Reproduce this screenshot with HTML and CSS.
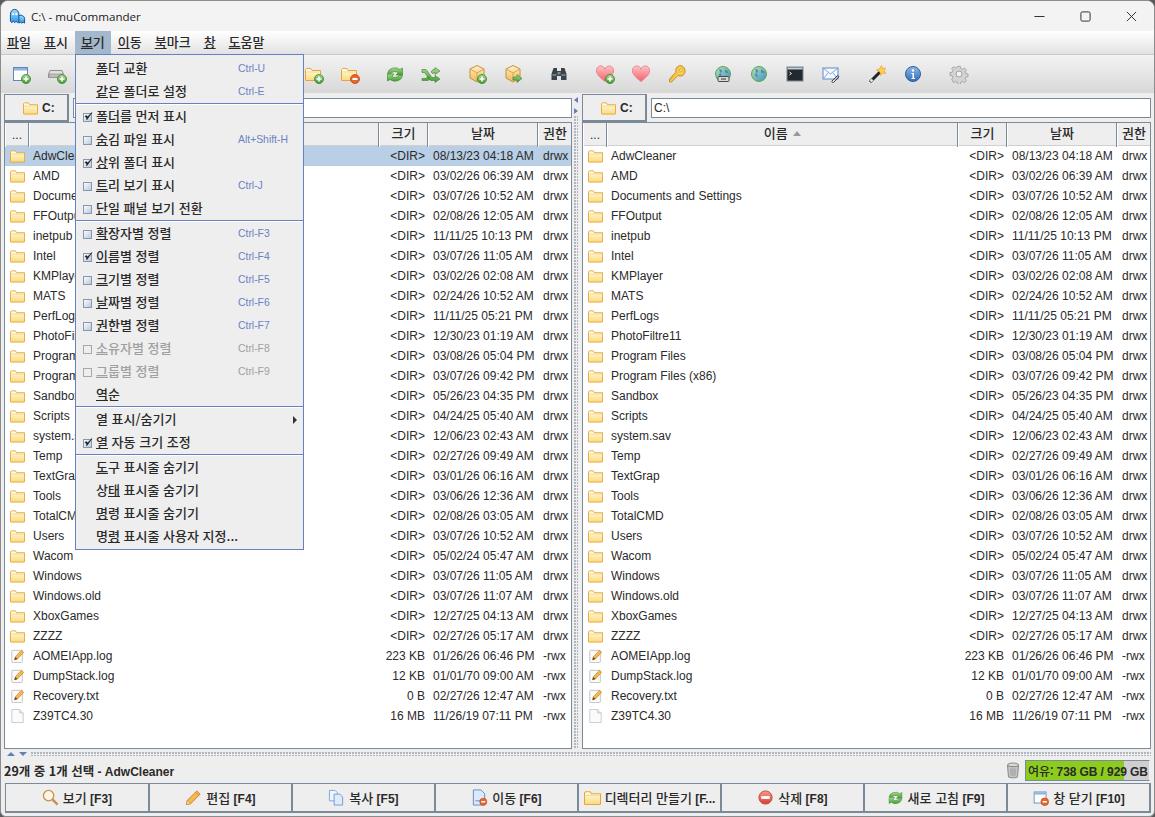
FILE: index.html
```html
<!DOCTYPE html>
<html lang="ko">
<head>
    <meta charset="UTF-8">
    <title>C:\ - muCommander</title>
    <link rel="stylesheet" href="styles.css">
</head>
<body>
    <!-- Icones -->
    <svg class="defs" xmlns="http://www.w3.org/2000/svg">
        <defs>
            <linearGradient id="gFolder" x1="0" y1="0" x2="0" y2="1"><stop offset="0" stop-color="#fffdf0"/><stop offset="1" stop-color="#fadb78"/></linearGradient>
            <linearGradient id="gGreen" x1="0" y1="0" x2="0" y2="1"><stop offset="0" stop-color="#a6dc8c"/><stop offset="1" stop-color="#3f9c34"/></linearGradient>
            <linearGradient id="gRed" x1="0" y1="0" x2="0" y2="1"><stop offset="0" stop-color="#f89a8c"/><stop offset="1" stop-color="#d83c30"/></linearGradient>
            <linearGradient id="gBox" x1="0" y1="0" x2="0" y2="1"><stop offset="0" stop-color="#fff2c8"/><stop offset="1" stop-color="#eeb858"/></linearGradient>
            <linearGradient id="gBlue" x1="0" y1="0" x2="0" y2="1"><stop offset="0" stop-color="#8fb8ea"/><stop offset="1" stop-color="#2f6cb8"/></linearGradient>
            <linearGradient id="gChk" x1="0" y1="0" x2="1" y2="1"><stop offset="0" stop-color="#fff"/><stop offset="1" stop-color="#b4c6de"/></linearGradient>
            <linearGradient id="gGlobe" x1="0" y1="0" x2="1" y2="1"><stop offset="0" stop-color="#bfe3a6"/><stop offset="1" stop-color="#3d8ecb"/></linearGradient>
            <linearGradient id="gHeart" x1="0" y1="0" x2="0" y2="1"><stop offset="0" stop-color="#ffc4c4"/><stop offset="1" stop-color="#f0606c"/></linearGradient>
            <linearGradient id="gGhost" x1="0" y1="0" x2="0" y2="1"><stop offset="0" stop-color="#9fdcff"/><stop offset="1" stop-color="#2f96e6"/></linearGradient>

            <symbol id="folder" viewBox="0 0 16 14"><path d="M.5 2.500V13a.5.5 0 0 0 .5.5h14a.5.5 0 0 0 .5-.5V3.500H7L5.800 1.500H1.500z" fill="url(#gFolder)" stroke="#e5a63e"/><path d="M1.500 5h13" stroke="#f6d98c"/></symbol>
            <symbol id="file" viewBox="0 0 16 16"><path d="M1.500.5h9l4 4v11h-13z" fill="#fbfbfb" stroke="#c4c4c4"/><path d="M10.500.5v4h4" fill="#ececec" stroke="#c4c4c4"/></symbol>
            <symbol id="txt" viewBox="0 0 16 16"><rect x="1.500" y="1.500" width="12" height="14" rx="1" fill="#fbfbfb" stroke="#bdbdbd"/><path d="M4.500 12.500l1-3.500 7-7.500 2.500 2.300-7 7.500z" fill="#f6b94e" stroke="#c9822a" stroke-width=".8"/><path d="M4.500 12.500l1-3.500 2.500 2.300z" fill="#5a4630"/></symbol>

            <symbol id="plus" viewBox="0 0 20 20"><circle cx="15" cy="15" r="4.500" fill="url(#gGreen)" stroke="#3c7c30" stroke-width=".8"/><path d="M15 12.500v5M12.500 15h5" stroke="#fff" stroke-width="1.600"/></symbol>
            <symbol id="minus" viewBox="0 0 20 20"><circle cx="15" cy="15" r="4.500" fill="#e9672a" stroke="#b9481a" stroke-width=".8"/><path d="M12.500 15h5" stroke="#fff" stroke-width="1.800"/></symbol>
            <symbol id="win" viewBox="0 0 20 20"><rect x="2.500" y="3.500" width="14" height="13" fill="#fdfdfd" stroke="#5f86bd"/><rect x="3" y="4" width="13" height="2.500" fill="#8fb1de"/></symbol>
            <symbol id="drive" viewBox="0 0 20 20"><path d="M3 6.500h12l1.500 4v3h-15v-3z" fill="#e0e0e0" stroke="#8c8c8c"/><rect x="2" y="10" width="14" height="3.500" fill="#bdbdbd" stroke="#8c8c8c" stroke-width=".6"/></symbol>
            <symbol id="box" viewBox="0 0 20 20"><path d="M10 1.500l7 3.500v9l-7 4-7-4V5z" fill="url(#gBox)" stroke="#c68f3a"/><path d="M3 5l7 4 7-4M10 9v9" fill="none" stroke="#d9a64e"/></symbol>
            <symbol id="heart" viewBox="0 0 20 20"><path d="M10 17.500C4 13 1.500 10 1.500 7a4.300 4.300 0 0 1 8.500-1.500A4.300 4.300 0 0 1 18.500 7c0 3-2.500 6-8.500 10.500z" fill="url(#gHeart)" stroke="#e88a90"/></symbol>
            <symbol id="globe" viewBox="0 0 20 20"><circle cx="10" cy="10" r="7.500" fill="url(#gGlobe)" stroke="#5aa84c"/><path d="M6 5c2 0 3 1 3 2.500S6 9 6 11s3 1 3.500 3M12 5.500c1.500 1 3 1.500 3.500 3-1.500 1-3 .5-3.500-.5z" fill="#3f7fbe" stroke="none" opacity=".85"/></symbol>
            <symbol id="refresh" viewBox="0 0 20 20"><path d="M2.500 9.500A7.500 6.500 0 0 1 15 5.500l2.500-1.500v7H11l2.200-2.200A4.200 3.500 0 0 0 6.200 9.500z" fill="url(#gGreen)" stroke="#4c8c3c" stroke-width=".7"/><path d="M17.500 11.500A7.500 6.500 0 0 1 5 15.500L2.500 17v-7H9l-2.200 2.200a4.200 3.500 0 0 0 7-.7z" fill="url(#gGreen)" stroke="#4c8c3c" stroke-width=".7"/></symbol>

            <symbol id="cb-on" viewBox="0 0 10 10"><rect x=".5" y="1.500" width="8" height="8" fill="url(#gChk)" stroke="#8a97a8"/><path d="M2 4.500l1.500 1 .3 2.300L9 .5 4.700 4.800 3 3.500z" fill="#1c1c1c" stroke="#1c1c1c" stroke-width=".6"/></symbol>
            <symbol id="cb-off" viewBox="0 0 10 10"><rect x=".5" y="1.500" width="8" height="8" fill="url(#gChk)" stroke="#8a97a8"/></symbol>
            <symbol id="cb-dis" viewBox="0 0 10 10"><rect x=".5" y="1.500" width="8" height="8" fill="none" stroke="#a8a8a8"/></symbol>
        </defs>
    </svg>

    <div class="window">
        <div class="titlebar">
            <svg class="app-icon" viewBox="0 0 18 18"><path d="M9 9c1-2 7-2 7.500 2v5l-1.500-1-1.500 1-1.500-1-1.500 1z" fill="url(#gGhost)" stroke="#0f4f86"/><path d="M1.500 14V7C1.500 3.500 3.500 1.500 6 1.500S10.500 3.500 10.500 7v7l-1.500 1.500L7.500 14 6 15.500 4.500 14 3 15.500z" fill="url(#gGhost)" stroke="#0f4f86"/><circle cx="4.500" cy="6.500" r="1.200" fill="#fff"/><circle cx="7.800" cy="6.500" r="1.200" fill="#fff"/></svg>
            <span class="title">C:\ - muCommander</span>
            <div class="winctl">
                <svg viewBox="0 0 12 12"><path d="M.5 6h11" stroke="#222"/></svg>
                <svg viewBox="0 0 12 12"><rect x="1" y="1" width="10" height="10" rx="1.500" fill="none" stroke="#222"/></svg>
                <svg viewBox="0 0 12 12"><path d="M1 1l10 10M11 1L1 11" stroke="#222"/></svg>
            </div>
        </div>

        <div class="menubar">
            <span class="menu"><u>파</u>일</span>
            <span class="menu"><u>표</u>시</span>
            <span class="menu open"><u>보</u>기</span>
            <span class="menu"><u>이</u>동</span>
            <span class="menu"><u>북</u>마크</span>
            <span class="menu"><u>창</u></span>
            <span class="menu"><u>도</u>움말</span>
        </div>

        <div class="toolbar">
            <span class="tool"><svg><use href="#win"/><use href="#plus"/></svg></span>
            <span class="tool"><svg><use href="#drive"/><use href="#plus"/></svg></span>
            <span class="tool-hidden"></span>
            <span class="tool"><svg><use href="#folder" x="1" y="3" width="16" height="14"/><use href="#plus"/></svg></span>
            <span class="tool"><svg><use href="#folder" x="1" y="3" width="16" height="14"/><use href="#minus"/></svg></span>
            <span class="tool sep9"><svg><use href="#refresh"/></svg></span>
            <span class="tool"><svg viewBox="0 0 20 20"><path d="M1 5.500h4l6 8h3v-2l5 3.500-5 3.500v-2h-4.500l-6-8H1zM1 14.500h4l2-2.500 2 2.300-1.800 2.200H1zM10 8l2-2.500h2v-2l5 3.500-5 3.500v-2h-1l-1 1.300z" fill="url(#gGreen)" stroke="#3f7c34" stroke-width=".6"/></svg></span>
            <span class="tool sep"><svg><use href="#box"/><use href="#plus"/></svg></span>
            <span class="tool"><svg><use href="#box"/><path d="M10 13h4v-2.500l5 4-5 4V16h-4z" fill="url(#gGreen)" stroke="#3f7c34" stroke-width=".6"/></svg></span>
            <span class="tool sep"><svg viewBox="0 0 20 20"><path d="M4.500 4h3.500v3h4V4h3.500l2 6v6h-5.500v-4H8v4H2.500v-6z" fill="#39434c"/><path d="M3.500 11h4M12.500 11h4" stroke="#aab4bd"/><rect x="8.500" y="8" width="3" height="2.500" fill="#7c8892"/></svg></span>
            <span class="tool sep"><svg><use href="#heart"/><use href="#plus"/></svg></span>
            <span class="tool"><svg><use href="#heart"/></svg></span>
            <span class="tool"><svg viewBox="0 0 20 20"><path d="M12.500 1.500a5.500 5.500 0 0 1 2.500 10.400 5.500 5.500 0 0 1-4-.5L4.500 18H2.500v-3l1.500-.2V13l1.500-.2.2-1.500L9 8.500a5.500 5.500 0 0 1 3.500-7z" fill="#f7c84a" stroke="#c98f22"/><circle cx="14" cy="6" r="1.400" fill="#fff3c0" stroke="#c98f22" stroke-width=".6"/></svg></span>
            <span class="tool sep"><svg><use href="#globe"/><rect x="5" y="12.500" width="11" height="5" rx="1" fill="#d8d8d8" stroke="#4a4a4a"/><path d="M8 15h5" stroke="#333"/></svg></span>
            <span class="tool"><svg><use href="#globe"/></svg></span>
            <span class="tool"><svg viewBox="0 0 20 20"><rect x="2" y="3" width="16" height="14" fill="#222a30" stroke="#7c8a96"/><rect x="2.500" y="3.500" width="15" height="2" fill="#c4ccd4"/><path d="M4.500 8l2 1.500-2 1.500" fill="none" stroke="#eee"/></svg></span>
            <span class="tool"><svg viewBox="0 0 20 20"><rect x="2" y="4" width="15" height="11" fill="#f4f8ff" stroke="#5f8ac2"/><path d="M2 4l7.500 6L17 4M2 15l5-6M17 15l-5-6" fill="none" stroke="#7ea6d8"/><path d="M11 17l5-5c1-1 2.500.5 1.500 1.500l-5 5c-1 .5-2-.5-1.500-1.500z" fill="none" stroke="#444"/></svg></span>
            <span class="tool sep"><svg viewBox="0 0 20 20"><path d="M3 18L13 8" stroke="#222" stroke-width="3"/><path d="M3.500 17.500l2-2" stroke="#eee" stroke-width="2.400"/><path d="M14.500 1.500l1 3 3-.5-1.500 3 2 2.500-3.500-.5-2 2.500-.5-3.500L9.500 6l3-1z" fill="#fbd24a" stroke="#e8942a" stroke-width=".6"/></svg></span>
            <span class="tool"><svg viewBox="0 0 20 20"><circle cx="10" cy="10" r="7.500" fill="url(#gBlue)" stroke="#2c5f9e"/><circle cx="10" cy="6.500" r="1.200" fill="#fff"/><path d="M8.500 9H11v5h1v1H8.500v-1h1v-4h-1z" fill="#fff"/></svg></span>
            <span class="tool sep"><svg viewBox="0 0 20 20"><path d="M8.500 1.500h3l.5 2.500 1.800.8 2.200-1.400 2.100 2.100-1.400 2.200.8 1.800 2.500.5v3l-2.500.5-.8 1.800 1.400 2.200-2.100 2.100-2.200-1.400-1.800.8-.5 2.500h-3l-.5-2.500-1.800-.8-2.200 1.400L1.900 16l1.400-2.200-.8-1.800L0 11.500v-3L2.500 8l.8-1.800L1.900 4l2.100-2.100 2.200 1.400L8 2.500z" transform="translate(1 1) scale(.9)" fill="#d4d4d4" stroke="#a0a0a0"/><circle cx="10" cy="10" r="3" fill="#f2f2f2" stroke="#a0a0a0"/></svg></span>
        </div>

        <div class="panes">
            <div class="pane">
                <div class="locbar">
                    <div class="drive"><svg class="ic"><use href="#folder"/></svg>C:</div>
                    <div class="path"></div>
                </div>
                <div class="filetable">
                    <div class="row head">
                        <span class="up">...</span><span class="hname"></span><span class="ko">크기</span><span class="ko">날짜</span><span class="ko">권한</span>
                    </div>
                    <div class="row sel"><svg class="ic"><use href="#folder"/></svg><span class="nm">AdwCleaner</span><span class="sz">&lt;DIR&gt;</span><span class="dt">08/13/23 04:18 AM</span><span class="pm">drwx</span></div>
                    <div class="row"><svg class="ic"><use href="#folder"/></svg><span class="nm">AMD</span><span class="sz">&lt;DIR&gt;</span><span class="dt">03/02/26 06:39 AM</span><span class="pm">drwx</span></div>
                    <div class="row"><svg class="ic"><use href="#folder"/></svg><span class="nm">Documents and Settings</span><span class="sz">&lt;DIR&gt;</span><span class="dt">03/07/26 10:52 AM</span><span class="pm">drwx</span></div>
                    <div class="row"><svg class="ic"><use href="#folder"/></svg><span class="nm">FFOutput</span><span class="sz">&lt;DIR&gt;</span><span class="dt">02/08/26 12:05 AM</span><span class="pm">drwx</span></div>
                    <div class="row"><svg class="ic"><use href="#folder"/></svg><span class="nm">inetpub</span><span class="sz">&lt;DIR&gt;</span><span class="dt">11/11/25 10:13 PM</span><span class="pm">drwx</span></div>
                    <div class="row"><svg class="ic"><use href="#folder"/></svg><span class="nm">Intel</span><span class="sz">&lt;DIR&gt;</span><span class="dt">03/07/26 11:05 AM</span><span class="pm">drwx</span></div>
                    <div class="row"><svg class="ic"><use href="#folder"/></svg><span class="nm">KMPlayer</span><span class="sz">&lt;DIR&gt;</span><span class="dt">03/02/26 02:08 AM</span><span class="pm">drwx</span></div>
                    <div class="row"><svg class="ic"><use href="#folder"/></svg><span class="nm">MATS</span><span class="sz">&lt;DIR&gt;</span><span class="dt">02/24/26 10:52 AM</span><span class="pm">drwx</span></div>
                    <div class="row"><svg class="ic"><use href="#folder"/></svg><span class="nm">PerfLogs</span><span class="sz">&lt;DIR&gt;</span><span class="dt">11/11/25 05:21 PM</span><span class="pm">drwx</span></div>
                    <div class="row"><svg class="ic"><use href="#folder"/></svg><span class="nm">PhotoFiltre11</span><span class="sz">&lt;DIR&gt;</span><span class="dt">12/30/23 01:19 AM</span><span class="pm">drwx</span></div>
                    <div class="row"><svg class="ic"><use href="#folder"/></svg><span class="nm">Program Files</span><span class="sz">&lt;DIR&gt;</span><span class="dt">03/08/26 05:04 PM</span><span class="pm">drwx</span></div>
                    <div class="row"><svg class="ic"><use href="#folder"/></svg><span class="nm">Program Files (x86)</span><span class="sz">&lt;DIR&gt;</span><span class="dt">03/07/26 09:42 PM</span><span class="pm">drwx</span></div>
                    <div class="row"><svg class="ic"><use href="#folder"/></svg><span class="nm">Sandbox</span><span class="sz">&lt;DIR&gt;</span><span class="dt">05/26/23 04:35 PM</span><span class="pm">drwx</span></div>
                    <div class="row"><svg class="ic"><use href="#folder"/></svg><span class="nm">Scripts</span><span class="sz">&lt;DIR&gt;</span><span class="dt">04/24/25 05:40 AM</span><span class="pm">drwx</span></div>
                    <div class="row"><svg class="ic"><use href="#folder"/></svg><span class="nm">system.sav</span><span class="sz">&lt;DIR&gt;</span><span class="dt">12/06/23 02:43 AM</span><span class="pm">drwx</span></div>
                    <div class="row"><svg class="ic"><use href="#folder"/></svg><span class="nm">Temp</span><span class="sz">&lt;DIR&gt;</span><span class="dt">02/27/26 09:49 AM</span><span class="pm">drwx</span></div>
                    <div class="row"><svg class="ic"><use href="#folder"/></svg><span class="nm">TextGrap</span><span class="sz">&lt;DIR&gt;</span><span class="dt">03/01/26 06:16 AM</span><span class="pm">drwx</span></div>
                    <div class="row"><svg class="ic"><use href="#folder"/></svg><span class="nm">Tools</span><span class="sz">&lt;DIR&gt;</span><span class="dt">03/06/26 12:36 AM</span><span class="pm">drwx</span></div>
                    <div class="row"><svg class="ic"><use href="#folder"/></svg><span class="nm">TotalCMD</span><span class="sz">&lt;DIR&gt;</span><span class="dt">02/08/26 03:05 AM</span><span class="pm">drwx</span></div>
                    <div class="row"><svg class="ic"><use href="#folder"/></svg><span class="nm">Users</span><span class="sz">&lt;DIR&gt;</span><span class="dt">03/07/26 10:52 AM</span><span class="pm">drwx</span></div>
                    <div class="row"><svg class="ic"><use href="#folder"/></svg><span class="nm">Wacom</span><span class="sz">&lt;DIR&gt;</span><span class="dt">05/02/24 05:47 AM</span><span class="pm">drwx</span></div>
                    <div class="row"><svg class="ic"><use href="#folder"/></svg><span class="nm">Windows</span><span class="sz">&lt;DIR&gt;</span><span class="dt">03/07/26 11:05 AM</span><span class="pm">drwx</span></div>
                    <div class="row"><svg class="ic"><use href="#folder"/></svg><span class="nm">Windows.old</span><span class="sz">&lt;DIR&gt;</span><span class="dt">03/07/26 11:07 AM</span><span class="pm">drwx</span></div>
                    <div class="row"><svg class="ic"><use href="#folder"/></svg><span class="nm">XboxGames</span><span class="sz">&lt;DIR&gt;</span><span class="dt">12/27/25 04:13 AM</span><span class="pm">drwx</span></div>
                    <div class="row"><svg class="ic"><use href="#folder"/></svg><span class="nm">ZZZZ</span><span class="sz">&lt;DIR&gt;</span><span class="dt">02/27/26 05:17 AM</span><span class="pm">drwx</span></div>
                    <div class="row"><svg class="ic"><use href="#txt"/></svg><span class="nm">AOMEIApp.log</span><span class="sz">223 KB</span><span class="dt">01/26/26 06:46 PM</span><span class="pm">-rwx</span></div>
                    <div class="row"><svg class="ic"><use href="#txt"/></svg><span class="nm">DumpStack.log</span><span class="sz">12 KB</span><span class="dt">01/01/70 09:00 AM</span><span class="pm">-rwx</span></div>
                    <div class="row"><svg class="ic"><use href="#txt"/></svg><span class="nm">Recovery.txt</span><span class="sz">0 B</span><span class="dt">02/27/26 12:47 AM</span><span class="pm">-rwx</span></div>
                    <div class="row"><svg class="ic"><use href="#file"/></svg><span class="nm">Z39TC4.30</span><span class="sz">16 MB</span><span class="dt">11/26/19 07:11 PM</span><span class="pm">-rwx</span></div>
                </div>
            </div>

            <div class="vsplit"><i class="arr-l"></i><i class="arr-r"></i><div class="dots"></div></div>

            <div class="pane right">
                <div class="locbar">
                    <div class="drive"><svg class="ic"><use href="#folder"/></svg>C:</div>
                    <div class="path">C:\</div>
                </div>
                <div class="filetable">
                    <div class="row head">
                        <span class="up">...</span><span class="hname ko">이름 <i class="sort"></i></span><span class="ko">크기</span><span class="ko">날짜</span><span class="ko">권한</span>
                    </div>
                    <div class="row"><svg class="ic"><use href="#folder"/></svg><span class="nm">AdwCleaner</span><span class="sz">&lt;DIR&gt;</span><span class="dt">08/13/23 04:18 AM</span><span class="pm">drwx</span></div>
                    <div class="row"><svg class="ic"><use href="#folder"/></svg><span class="nm">AMD</span><span class="sz">&lt;DIR&gt;</span><span class="dt">03/02/26 06:39 AM</span><span class="pm">drwx</span></div>
                    <div class="row"><svg class="ic"><use href="#folder"/></svg><span class="nm">Documents and Settings</span><span class="sz">&lt;DIR&gt;</span><span class="dt">03/07/26 10:52 AM</span><span class="pm">drwx</span></div>
                    <div class="row"><svg class="ic"><use href="#folder"/></svg><span class="nm">FFOutput</span><span class="sz">&lt;DIR&gt;</span><span class="dt">02/08/26 12:05 AM</span><span class="pm">drwx</span></div>
                    <div class="row"><svg class="ic"><use href="#folder"/></svg><span class="nm">inetpub</span><span class="sz">&lt;DIR&gt;</span><span class="dt">11/11/25 10:13 PM</span><span class="pm">drwx</span></div>
                    <div class="row"><svg class="ic"><use href="#folder"/></svg><span class="nm">Intel</span><span class="sz">&lt;DIR&gt;</span><span class="dt">03/07/26 11:05 AM</span><span class="pm">drwx</span></div>
                    <div class="row"><svg class="ic"><use href="#folder"/></svg><span class="nm">KMPlayer</span><span class="sz">&lt;DIR&gt;</span><span class="dt">03/02/26 02:08 AM</span><span class="pm">drwx</span></div>
                    <div class="row"><svg class="ic"><use href="#folder"/></svg><span class="nm">MATS</span><span class="sz">&lt;DIR&gt;</span><span class="dt">02/24/26 10:52 AM</span><span class="pm">drwx</span></div>
                    <div class="row"><svg class="ic"><use href="#folder"/></svg><span class="nm">PerfLogs</span><span class="sz">&lt;DIR&gt;</span><span class="dt">11/11/25 05:21 PM</span><span class="pm">drwx</span></div>
                    <div class="row"><svg class="ic"><use href="#folder"/></svg><span class="nm">PhotoFiltre11</span><span class="sz">&lt;DIR&gt;</span><span class="dt">12/30/23 01:19 AM</span><span class="pm">drwx</span></div>
                    <div class="row"><svg class="ic"><use href="#folder"/></svg><span class="nm">Program Files</span><span class="sz">&lt;DIR&gt;</span><span class="dt">03/08/26 05:04 PM</span><span class="pm">drwx</span></div>
                    <div class="row"><svg class="ic"><use href="#folder"/></svg><span class="nm">Program Files (x86)</span><span class="sz">&lt;DIR&gt;</span><span class="dt">03/07/26 09:42 PM</span><span class="pm">drwx</span></div>
                    <div class="row"><svg class="ic"><use href="#folder"/></svg><span class="nm">Sandbox</span><span class="sz">&lt;DIR&gt;</span><span class="dt">05/26/23 04:35 PM</span><span class="pm">drwx</span></div>
                    <div class="row"><svg class="ic"><use href="#folder"/></svg><span class="nm">Scripts</span><span class="sz">&lt;DIR&gt;</span><span class="dt">04/24/25 05:40 AM</span><span class="pm">drwx</span></div>
                    <div class="row"><svg class="ic"><use href="#folder"/></svg><span class="nm">system.sav</span><span class="sz">&lt;DIR&gt;</span><span class="dt">12/06/23 02:43 AM</span><span class="pm">drwx</span></div>
                    <div class="row"><svg class="ic"><use href="#folder"/></svg><span class="nm">Temp</span><span class="sz">&lt;DIR&gt;</span><span class="dt">02/27/26 09:49 AM</span><span class="pm">drwx</span></div>
                    <div class="row"><svg class="ic"><use href="#folder"/></svg><span class="nm">TextGrap</span><span class="sz">&lt;DIR&gt;</span><span class="dt">03/01/26 06:16 AM</span><span class="pm">drwx</span></div>
                    <div class="row"><svg class="ic"><use href="#folder"/></svg><span class="nm">Tools</span><span class="sz">&lt;DIR&gt;</span><span class="dt">03/06/26 12:36 AM</span><span class="pm">drwx</span></div>
                    <div class="row"><svg class="ic"><use href="#folder"/></svg><span class="nm">TotalCMD</span><span class="sz">&lt;DIR&gt;</span><span class="dt">02/08/26 03:05 AM</span><span class="pm">drwx</span></div>
                    <div class="row"><svg class="ic"><use href="#folder"/></svg><span class="nm">Users</span><span class="sz">&lt;DIR&gt;</span><span class="dt">03/07/26 10:52 AM</span><span class="pm">drwx</span></div>
                    <div class="row"><svg class="ic"><use href="#folder"/></svg><span class="nm">Wacom</span><span class="sz">&lt;DIR&gt;</span><span class="dt">05/02/24 05:47 AM</span><span class="pm">drwx</span></div>
                    <div class="row"><svg class="ic"><use href="#folder"/></svg><span class="nm">Windows</span><span class="sz">&lt;DIR&gt;</span><span class="dt">03/07/26 11:05 AM</span><span class="pm">drwx</span></div>
                    <div class="row"><svg class="ic"><use href="#folder"/></svg><span class="nm">Windows.old</span><span class="sz">&lt;DIR&gt;</span><span class="dt">03/07/26 11:07 AM</span><span class="pm">drwx</span></div>
                    <div class="row"><svg class="ic"><use href="#folder"/></svg><span class="nm">XboxGames</span><span class="sz">&lt;DIR&gt;</span><span class="dt">12/27/25 04:13 AM</span><span class="pm">drwx</span></div>
                    <div class="row"><svg class="ic"><use href="#folder"/></svg><span class="nm">ZZZZ</span><span class="sz">&lt;DIR&gt;</span><span class="dt">02/27/26 05:17 AM</span><span class="pm">drwx</span></div>
                    <div class="row"><svg class="ic"><use href="#txt"/></svg><span class="nm">AOMEIApp.log</span><span class="sz">223 KB</span><span class="dt">01/26/26 06:46 PM</span><span class="pm">-rwx</span></div>
                    <div class="row"><svg class="ic"><use href="#txt"/></svg><span class="nm">DumpStack.log</span><span class="sz">12 KB</span><span class="dt">01/01/70 09:00 AM</span><span class="pm">-rwx</span></div>
                    <div class="row"><svg class="ic"><use href="#txt"/></svg><span class="nm">Recovery.txt</span><span class="sz">0 B</span><span class="dt">02/27/26 12:47 AM</span><span class="pm">-rwx</span></div>
                    <div class="row"><svg class="ic"><use href="#file"/></svg><span class="nm">Z39TC4.30</span><span class="sz">16 MB</span><span class="dt">11/26/19 07:11 PM</span><span class="pm">-rwx</span></div>
                </div>
            </div>
        </div>

        <div class="hsplit"><i class="arr-u"></i><i class="arr-d"></i><div class="dots"></div></div>

        <div class="statusbar">
            <span class="status"><span class="ko">29개 중 1개 선택</span> - AdwCleaner</span>
            <svg class="trash" viewBox="0 0 14 17"><ellipse cx="7" cy="3" rx="5.500" ry="2" fill="#d8d8d8" stroke="#8a8a8a"/><path d="M1.500 3.500l1 11.500c.2 1 8.800 1 9 0l1-11.500c-1.500 1.500-9.500 1.500-11 0z" fill="#c4c4c4" stroke="#8a8a8a"/><path d="M5 6.500v7M7 6.500v7.500M9 6.500v7" stroke="#9a9a9a"/></svg>
            <div class="volume"><div class="volume-used" style="width: 80%"></div><span class="volume-text"><span class="ko">여유:</span> 738 GB / 929 GB</span></div>
        </div>

        <div class="cmdbar">
            <div class="cmd"><svg viewBox="0 0 18 18"><circle cx="7" cy="7" r="5.500" fill="#fdf6e8" stroke="#c9924a" stroke-width="1.400"/><path d="M11 11l5.500 5.500" stroke="#c9924a" stroke-width="2.600"/></svg><span><span class="ko">보기</span> [F3]</span></div>
            <div class="cmd"><svg viewBox="0 0 18 18"><path d="M1.500 16.500l1-4.500L12.500 2l3.500 3.500-10 10z" fill="#f6b94e" stroke="#c9822a"/><path d="M1.500 16.500l1-4.500 3.500 3.500z" fill="#f4dfbc" stroke="#c9822a" stroke-width=".6"/><path d="M11 3.500l3.500 3.500" stroke="#e07a50"/></svg><span><span class="ko">편집</span> [F4]</span></div>
            <div class="cmd"><svg viewBox="0 0 18 18"><path d="M1.500 1.500h6l2.500 2.500v8.500H1.500z" fill="#eef4fc" stroke="#7ea6d8"/><path d="M6.500 5.500h6l3 3v8.500h-9z" fill="#e0ebfa" stroke="#6f9ad2"/></svg><span><span class="ko">복사</span> [F5]</span></div>
            <div class="cmd"><svg viewBox="0 0 18 18"><path d="M2.500 1h8l4 4v12h-12z" fill="#dce9fa" stroke="#5f8ac2"/><path d="M4.500 12.500h6" stroke="#5f8ac2"/><circle cx="13" cy="13.500" r="3.800" fill="#e9672a" stroke="#b9481a" stroke-width=".6"/><path d="M10.800 13.500h4.400" stroke="#fff" stroke-width="1.500"/></svg><span><span class="ko">이동</span> [F6]</span></div>
            <div class="cmd"><svg viewBox="0 0 16 14"><use href="#folder"/></svg><span><span class="ko">디렉터리 만들기</span> [F...</span></div>
            <div class="cmd"><svg viewBox="0 0 18 18"><circle cx="9" cy="9" r="7" fill="url(#gRed)" stroke="#c04a40"/><rect x="4.500" y="7.500" width="9" height="3" fill="#fff"/></svg><span><span class="ko">삭제</span> [F8]</span></div>
            <div class="cmd"><svg viewBox="0 0 20 20"><use href="#refresh"/></svg><span><span class="ko">새로 고침</span> [F9]</span></div>
            <div class="cmd"><svg viewBox="0 0 20 20"><use href="#win"/><use href="#minus"/></svg><span><span class="ko">창 닫기</span> [F10]</span></div>
        </div>

        <!-- Menu ouvert -->
        <div class="popup">
            <div class="item"><i></i><span><u>폴</u>더 교환</span><em>Ctrl-U</em></div>
            <div class="item"><i></i><span><u>같</u>은 폴더로 설정</span><em>Ctrl-E</em></div>
            <div class="mseparator"></div>
            <div class="item"><svg class="cb"><use href="#cb-on"/></svg><span>폴<u>더</u>를 먼저 표시</span><em></em></div>
            <div class="item"><svg class="cb"><use href="#cb-off"/></svg><span><u>숨</u>김 파일 표시</span><em>Alt+Shift-H</em></div>
            <div class="item"><svg class="cb"><use href="#cb-on"/></svg><span><u>상</u>위 폴더 표시</span><em></em></div>
            <div class="item"><svg class="cb"><use href="#cb-off"/></svg><span><u>트</u>리 보기 표시</span><em>Ctrl-J</em></div>
            <div class="item"><svg class="cb"><use href="#cb-off"/></svg><span><u>단</u>일 패널 보기 전환</span><em></em></div>
            <div class="mseparator"></div>
            <div class="item"><svg class="cb"><use href="#cb-off"/></svg><span><u>확</u>장자별 정렬</span><em>Ctrl-F3</em></div>
            <div class="item"><svg class="cb"><use href="#cb-on"/></svg><span><u>이</u>름별 정렬</span><em>Ctrl-F4</em></div>
            <div class="item"><svg class="cb"><use href="#cb-off"/></svg><span><u>크</u>기별 정렬</span><em>Ctrl-F5</em></div>
            <div class="item"><svg class="cb"><use href="#cb-off"/></svg><span><u>날</u>짜별 정렬</span><em>Ctrl-F6</em></div>
            <div class="item"><svg class="cb"><use href="#cb-off"/></svg><span><u>권</u>한별 정렬</span><em>Ctrl-F7</em></div>
            <div class="item disabled"><svg class="cb"><use href="#cb-dis"/></svg><span><u>소</u>유자별 정렬</span><em>Ctrl-F8</em></div>
            <div class="item disabled"><svg class="cb"><use href="#cb-dis"/></svg><span><u>그</u>룹별 정렬</span><em>Ctrl-F9</em></div>
            <div class="item"><i></i><span><u>역</u>순</span><em></em></div>
            <div class="mseparator"></div>
            <div class="item"><i></i><span>열 표시/숨기기</span><em class="sub"></em></div>
            <div class="item"><svg class="cb"><use href="#cb-on"/></svg><span><u>열</u> 자동 크기 조정</span><em></em></div>
            <div class="mseparator"></div>
            <div class="item"><i></i><span><u>도</u>구 표시줄 숨기기</span><em></em></div>
            <div class="item"><i></i><span>상<u>태</u> 표시줄 숨기기</span><em></em></div>
            <div class="item"><i></i><span><u>명</u>령 표시줄 숨기기</span><em></em></div>
            <div class="item"><i></i><span>명<u>령</u> 표시줄 사용자 지정...</span><em></em></div>
        </div>
    </div>
</body>
</html>
```

FILE: styles.css
```css
* {
    box-sizing: border-box;
}
html, body {
    margin: 0;
    height: 100%;
    background: #5a5a5a;
    overflow: hidden;
}
body {
    font-family: "Liberation Sans", "Noto Sans CJK KR", sans-serif;
    font-size: 12px;
    color: #2a2a2a;
}
.defs {
    position: absolute;
    width: 0;
    height: 0;
}
.ko {
    font-family: "Noto Sans CJK KR", sans-serif;
    font-size: 13px;
    font-weight: 500;
}
.window {
    position: relative;
    display: flex;
    flex-direction: column;
    height: 817px;
    background: #eeeeee;
    border: 1px solid #8c8c8c;
    border-radius: 8px 8px 6px 6px;
    overflow: hidden;
}

/* Barre de titre */
.titlebar {
    display: flex;
    align-items: center;
    height: 30px;
    padding-left: 8px;
    background: #f3f3f3;
}
.app-icon {
    width: 17px;
    height: 17px;
}
.title {
    margin-left: 5px;
    font-family: "Open Sans", sans-serif;
    font-size: 11.6px;
    color: #1a1a1a;
}
.winctl {
    display: flex;
    margin-left: auto;
    padding-right: 17px;
}
.winctl svg {
    width: 11px;
    height: 11px;
    margin-left: 35px;
}

/* Menus */
.menubar {
    display: flex;
    gap: 1px;
    height: 24px;
    background: linear-gradient(#ffffff, #e2e2e2);
    border-bottom: 1px solid #c8c8c8;
}
.menu {
    padding: 0 6px;
    font-family: "Noto Sans CJK KR", sans-serif;
    font-size: 13px;
    font-weight: 500;
    line-height: 22px;
}
.menu.open {
    background: #a3b8cc;
}
u {
    text-underline-offset: 1px;
}

/* Barre d'outils */
.toolbar {
    display: flex;
    align-items: center;
    height: 38px;
    padding-left: 2px;
    background: linear-gradient(#f3f3f3, #d8d8d8);
}
.tool {
    display: flex;
    align-items: center;
    justify-content: center;
    width: 36px;
    height: 36px;
}
.tool svg {
    width: 20px;
    height: 20px;
}
.tool-hidden {
    width: 221px;
}
.sep {
    margin-left: 10px;
}
.sep9 {
    margin-left: 9px;
}

/* Panneaux */
.panes {
    display: flex;
    flex: 1;
    min-height: 0;
    padding-left: 3px;
}
.pane {
    display: flex;
    flex-direction: column;
    width: 568px;
}
.pane.right {
    width: 569px;
}
.locbar {
    display: flex;
    flex: none;
    height: 29px;
}
.drive {
    display: flex;
    align-items: center;
    gap: 4px;
    width: 65px;
    height: 28px;
    margin-top: 1px;
    padding-left: 18px;
    background: #eeeeee;
    border: 1px solid #7a8a99;
    border-width: 1px 2px 2px 1px;
    font-weight: 700;
}
.path {
    flex: 1;
    height: 20px;
    margin: 5px 0 0 4px;
    padding-left: 2px;
    background: #ffffff;
    border: 1px solid #7a8a99;
    line-height: 18px;
}
.filetable {
    flex: 1;
    min-height: 0;
    background: #ffffff;
    border: 1px solid #7a8a99;
    overflow: hidden;
}
.row {
    display: grid;
    grid-template-columns: 24px 1fr 49px 110px 33px;
    align-items: center;
    height: 20px;
    white-space: nowrap;
}
.row.sel {
    background: #b8cfe5;
}
.row.head {
    height: 23px;
    background: #eeeeee;
    border-bottom: 1px solid #d0d0d0;
    text-align: center;
    align-items: stretch;
}
.row.head > span {
    line-height: 20px;
    border-left: 1px solid #ffffff;
    border-right: 1px solid #7a8a99;
}
.row.head > span:last-child {
    border-right: 0;
}
.row.head .up {
    line-height: 24px;
}
.sort {
    display: inline-block;
    margin-left: 2px;
    vertical-align: 2px;
    border: 4px solid transparent;
    border-top: 0;
    border-bottom: 5px solid #9a9a9a;
}
.ic {
    width: 15px;
    height: 14px;
    margin-left: 5px;
}
.drive .ic {
    margin-left: 0;
    flex: none;
}
.nm {
    padding-left: 4px;
}
.sz {
    padding-right: 3px;
    text-align: right;
}
.dt {
    padding-left: 5px;
}
.pm {
    padding-left: 5px;
}

/* Separateurs */
.vsplit {
    display: flex;
    flex-direction: column;
    align-items: center;
    width: 10px;
}
.arr-l, .arr-r {
    width: 0;
    height: 0;
    margin-right: 2px;
    border-top: 3.5px solid transparent;
    border-bottom: 3.5px solid transparent;
}
.arr-l {
    margin-top: 4px;
    border-right: 4px solid #5f7fb8;
}
.arr-r {
    margin-top: 5px;
    border-left: 4px solid #5f7fb8;
}
.vsplit .dots {
    flex: 1;
    width: 4px;
    margin: 2px 2px 0 0;
}
.dots {
    background-image: radial-gradient(circle at 1px 1px, #b0b6bc 0.8px, transparent 1px);
    background-size: 3px 3px;
}
.hsplit {
    display: flex;
    flex: none;
    align-items: center;
    gap: 4px;
    height: 9px;
    padding-left: 6px;
}
.hsplit .dots {
    flex: 1;
    height: 4px;
    margin-right: 3px;
}
.arr-u, .arr-d {
    width: 0;
    height: 0;
    border-left: 4px solid transparent;
    border-right: 4px solid transparent;
}
.arr-u {
    border-bottom: 4px solid #5f7fb8;
}
.arr-d {
    border-top: 4px solid #5f7fb8;
}

/* Barre d'etat */
.statusbar {
    display: flex;
    flex: none;
    align-items: center;
    height: 25px;
    padding: 0 4px 0 3px;
}
.status {
    font-weight: 700;
}
.status .ko {
    font-size: 12.5px;
    font-weight: 700;
}
.trash {
    width: 14px;
    height: 17px;
    margin-left: auto;
}
.volume {
    position: relative;
    width: 125px;
    height: 21px;
    margin-left: 5px;
    background: #cfcfcf;
    border: 1px solid #7a8a99;
    border-right-color: #eeeeee;
}
.volume-used {
    height: 100%;
    background: #8ccc1c;
}
.volume-text {
    position: absolute;
    top: 0;
    left: 2px;
    font-weight: 700;
    letter-spacing: -0.1px;
    line-height: 19px;
    white-space: nowrap;
}
.volume-text .ko {
    font-size: 12px;
}

/* Boutons de commande */
.cmdbar {
    display: grid;
    flex: none;
    grid-template-columns: 145px repeat(7, 143px);
    height: 33px;
    padding: 0 0 3px 4px;
}
.cmd {
    display: flex;
    align-items: center;
    justify-content: center;
    gap: 4px;
    border: 1px solid #7a8a99;
    border-width: 1px 2px 2px 1px;
    font-weight: 700;
    white-space: nowrap;
}
.cmd + .cmd {
    border-left: 0;
}
.cmd svg {
    width: 17px;
    height: 17px;
}

/* Menu deroulant */
.popup {
    position: absolute;
    top: 53px;
    left: 74px;
    width: 229px;
    padding: 2px 0 1px;
    background: #eeeeee;
    border: 1px solid #6382bf;
}
.item {
    display: grid;
    grid-template-columns: 20px 142px 1fr;
    align-items: center;
    height: 23px;
    font-family: "Noto Sans CJK KR", sans-serif;
    font-size: 13px;
    font-weight: 500;
    white-space: nowrap;
}
.item > span {
    line-height: 21px;
    height: 23px;
}
.item em {
    font-family: "Liberation Sans", sans-serif;
    font-size: 10.4px;
    font-style: normal;
    font-weight: 400;
    color: #6b82c4;
}
.item.disabled, .item.disabled em {
    color: #a0a0a0;
}
.cb {
    width: 10px;
    height: 10px;
    margin-left: 7px;
}
.sub {
    justify-self: end;
    width: 0;
    height: 0;
    margin-right: 6px;
    border-top: 4px solid transparent;
    border-bottom: 4px solid transparent;
    border-left: 4px solid #333333;
}
.mseparator {
    height: 2px;
    background: #ffffff;
    border-top: 1px solid #6382bf;
}
```
